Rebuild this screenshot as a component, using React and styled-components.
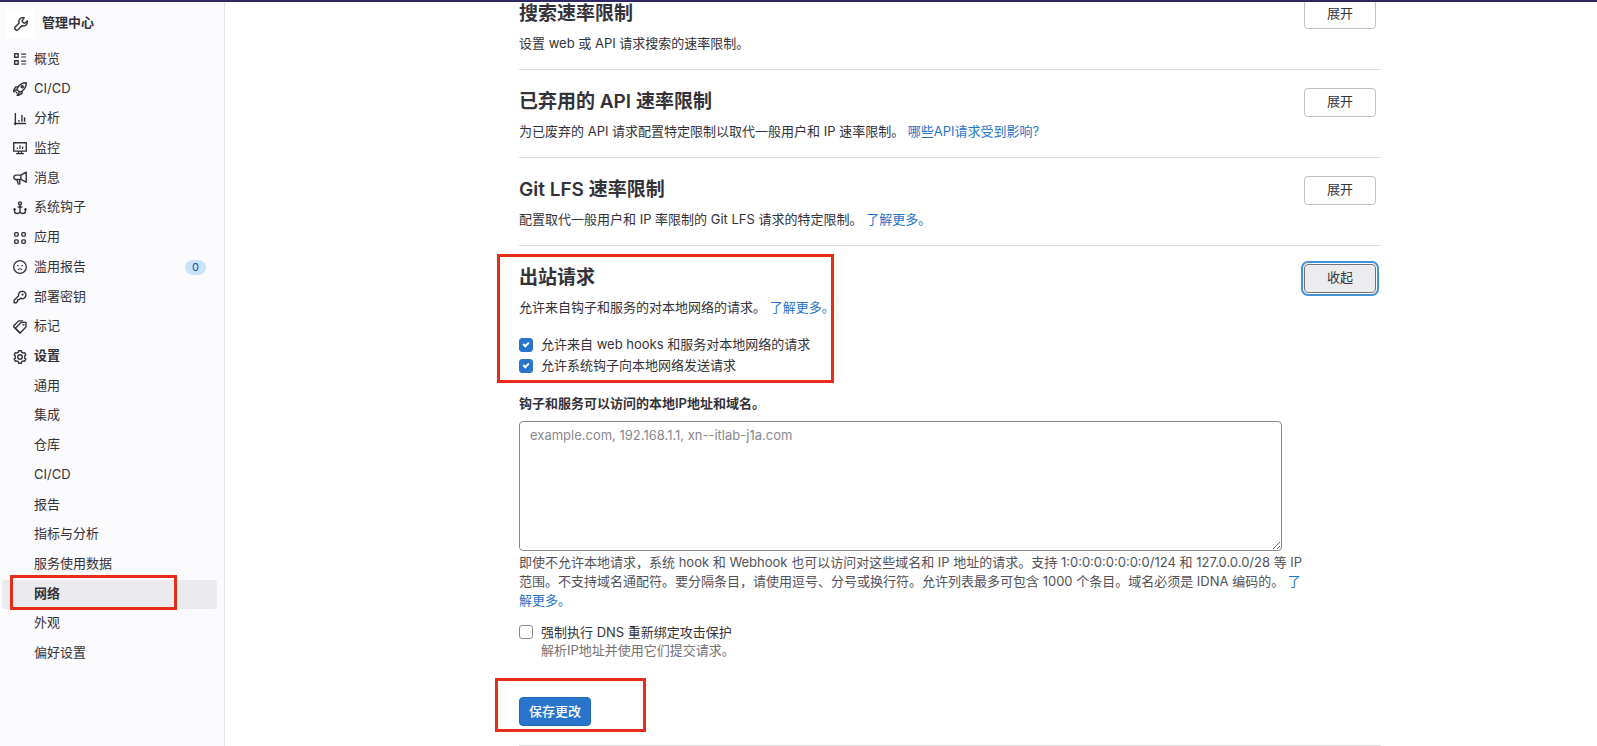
import React from 'react';
import styled, { createGlobalStyle, css } from 'styled-components';

const GlobalStyle = createGlobalStyle`
  *, *::before, *::after { box-sizing: border-box; }
  body {
    margin: 0;
    background: #fff;
    color: #333238;
    font-family: Inter, "Noto Sans CJK SC", sans-serif;
    font-size: 13px;
    line-height: 19px;
  }
  button, input, textarea { font: inherit; color: inherit; }
  h2, p, ul { margin: 0; padding: 0; }
`;

const TopBar = styled.div`
  position: fixed;
  top: 0;
  left: 0;
  right: 0;
  height: 2px;
  background: #2e2860;
  z-index: 2;
`;

const Page = styled.div`
  display: flex;
  min-height: 100vh;
`;

const Sidebar = styled.nav`
  flex: 0 0 225px;
  display: flex;
  flex-direction: column;
  padding: 9px 7px 77px 2px;
  background: #fbfafd;
  border-right: 1px solid #e3e3e6;
`;

const Context = styled.div`
  display: flex;
  align-items: center;
  gap: 7px;
  height: 29px;
  margin: 0 0 7px 4px;
  font-weight: 600;
`;

const ContextIcon = styled.span`
  display: flex;
  align-items: center;
  justify-content: center;
  width: 29px;
  height: 29px;
  border-radius: 4px;
  background: #fff;
`;

const ContextName = styled.span`
  padding-bottom: 2px;
`;

const NavList = styled.ul`
  flex: ${(p) => p.$rows} 1 0;
  display: grid;
  grid-auto-rows: minmax(28px, 1fr);
  list-style: none;
`;

const NavItem = styled.li`
  position: relative;
  display: flex;
  padding-bottom: 1px;
`;

const NavLink = styled.a`
  flex: 1;
  display: flex;
  align-items: center;
  gap: 7px;
  padding: 0 11px;
  border-radius: 4px;
  color: inherit;
  text-decoration: none;
  ${(p) => p.$nested && css`padding-left: 32px;`}
  ${(p) => p.$strong && css`font-weight: 600;`}
  ${(p) => p.$current && css`background: #ebeaee;`}
`;

const NavText = styled.span`
  flex: 1;
  padding-bottom: 2px;
`;

const Badge = styled.span`
  padding: 0 7px;
  border-radius: 8px;
  background: #cbe2f9;
  color: #0b5cad;
  font-size: 11px;
  line-height: 15px;
`;

const Glyph = styled.svg`
  flex: none;
  width: 14px;
  height: 14px;
  fill: none;
  stroke: #333238;
  stroke-width: 1.6;
  stroke-linejoin: round;
`;

const Marker = styled.span`
  position: absolute;
  left: ${(p) => p.$left}px;
  top: ${(p) => p.$top}px;
  width: ${(p) => p.$width}px;
  height: ${(p) => p.$height}px;
  border: 3px solid #e92c1a;
  pointer-events: none;
`;

const Main = styled.main`
  flex: 1;
  min-width: 0;
  margin-top: -18px;
  padding: 0 216px 0 294px;
`;

const Section = styled.section`
  position: relative;
  padding: 18px 0 16px;
  border-bottom: 1px solid #dcdcde;
`;

const SectionHead = styled.header`
  display: flex;
  justify-content: space-between;
  align-items: flex-start;
  height: 53px;
  padding-right: 5px;
`;

const Title = styled.h2`
  margin-bottom: 7px;
  font-size: 19px;
  line-height: 27px;
  font-weight: 600;
`;

const Link = styled.a`
  color: #1f75cb;
  text-decoration: none;
`;

const Button = styled.button`
  flex: none;
  width: 72px;
  height: 29px;
  padding: 0 0 3px;
  border: 1px solid #bfbfc3;
  border-radius: 4px;
  background: #fff;
  ${(p) => p.$open && css`
    border-color: #737278;
    background: #ececef;
    box-shadow: 0 0 0 1px #fff, 0 0 0 3px #428fdc;
    outline: none;
  `}
  ${(p) => p.$primary && css`
    padding-bottom: 1px;
    border-color: #1f69b8;
    background: #2a75cc;
    color: #fff;
    font-weight: 500;
  `}
`;

const Form = styled.form`
  display: flex;
  flex-direction: column;
  align-items: flex-start;
  padding: 17px 0 3px;
`;

const CheckLabel = styled.label`
  display: flex;
  align-items: center;
  gap: 8px;
  line-height: 21px;
`;

const Checkbox = styled.input.attrs({ type: 'checkbox' })`
  appearance: none;
  display: flex;
  justify-content: center;
  flex: none;
  width: 14px;
  height: 14px;
  margin: 0;
  border: 1px solid #89888d;
  border-radius: 3px;
  background: #fff;
  &:checked {
    border-color: #2a75cc;
    background: #2a75cc;
  }
  &:checked::after {
    content: '';
    width: 4px;
    height: 6px;
    margin-top: 2px;
    border: solid #fff;
    border-width: 0 2px 2px 0;
    transform: rotate(45deg);
  }
`;

const FieldLabel = styled.label`
  margin: 18px 0 8px;
  font-weight: 600;
`;

const TextArea = styled.textarea`
  display: block;
  width: calc(100% - 99px);
  height: 130px;
  padding: 4px 10px;
  border: 1px solid #89888d;
  border-radius: 4px;
  background: #fff;
  &::placeholder { color: #89888d; opacity: 1; }
`;

const Help = styled.p`
  margin-top: 2px;
  padding-right: 72px;
  color: #535158;
`;

const CheckGroup = styled.div`
  margin: 13px 0 38px;
  ${CheckLabel} { line-height: 18px; }
`;

const CheckHint = styled.p`
  padding-left: 22px;
  line-height: 18px;
  color: #737278;
`;

const icons = {
  wrench: (
    <path d="M11.600.9a4.600 4.600 0 0 0-5.700 6L1.400 11.400a2.200 2.200 0 0 0 3.100 3.100L9 10a4.600 4.600 0 0 0 6.100-5.500l-2.500 2.300a1 1 0 0 1-1.200.1L9.700 5.600a1 1 0 0 1-.3-1.400zM3.100 12.800v.1" />
  ),
  overview: (
    <>
      <path d="M1.900 2h4v4h-4zM1.900 10h4v4h-4z" />
      <path d="M9.300 2.300h5.700M9.300 5.700h5.700M9.300 10.300h5.700M9.300 13.700h5.700" strokeWidth="1.400" />
    </>
  ),
  rocket: (
    <>
      <path d="M15.200.8c-4.300 0-7.300 1.500-9.800 5.300l-1 2.200 3.300 3.300 2.200-1c3.800-2.500 5.300-5.500 5.300-9.800z" />
      <path d="M5.600 5.600H3.100L.9 9.300v2l3.300-2.800M10.400 10.400v2.500l-3.700 2.200h-2l2.800-3.300M3.200 11.200l1.600 1.600" />
      <circle cx="10.600" cy="5.400" r="1.200" />
    </>
  ),
  chart: (
    <>
      <path d="M2.700 1v14M1 13.200h14" />
      <path d="M6.800 9v2M10.200 3.500V11M13.200 6v5" />
    </>
  ),
  monitor: (
    <>
      <path d="M.8 2h14.400v9.600H.8zM3.500 14.400h9M6.300 11.600v2.600M9.700 11.600v2.600" />
      <path d="M5 7.500V9M8 4.800V9M11 6.300V9" strokeWidth="1.400" />
    </>
  ),
  bullhorn: (
    <path d="M15.100 1.200v11.600L9 9.700H3.200A2.200 2.200 0 0 1 1 7.500v-.6a2.200 2.200 0 0 1 2.200-2.200H9zM9 4.700v5M4.500 9.700l1.300 4.600a1.100 1.100 0 0 0 2.100-.5L7.500 9.700" />
  ),
  anchor: (
    <>
      <circle cx="8" cy="2.700" r="1.700" />
      <path d="M8 4.400V14M5.300 6.800h5.400M1.700 8.500V11c0 2 1.200 3.200 3 3.200 1.500 0 2.800-.7 3.300-2 .5 1.300 1.800 2 3.300 2 1.800 0 3-1.200 3-3.200V8.500M.6 10.200l1.100-1.500 1.400 1.500M12.900 10.200l1.400-1.500 1.100 1.500" />
    </>
  ),
  apps: (
    <>
      <rect x="1.900" y="1.900" width="4" height="4" rx="1.200" />
      <rect x="10.100" y="1.900" width="4" height="4" rx="1.200" />
      <rect x="1.900" y="10.100" width="4" height="4" rx="1.200" />
      <rect x="10.100" y="10.100" width="4" height="4" rx="1.200" />
    </>
  ),
  sad: (
    <>
      <circle cx="8" cy="8" r="7.200" strokeWidth="1.500" />
      <path d="M5.700 11.400c.5-.9 1.400-1.400 2.300-1.400s1.800.5 2.300 1.400M4.700 6l1.700.9M11.300 6l-1.700.9" strokeWidth="1.400" />
    </>
  ),
  key: (
    <>
      <path d="M10.300 1.500a4.200 4.200 0 1 1-1.700 7.900L7 11H5.300v1.800L3.800 14.500H1.300v-2.800l5.100-5a4.200 4.200 0 0 1 3.900-5.200z" />
      <circle cx="10.900" cy="5.200" r=".5" />
    </>
  ),
  labels: (
    <>
      <path d="M9.400 2.700h5.400v5.200L8.200 14.800 2.700 9.300z" />
      <path d="M11.600 1H6.400L1 6.500a1 1 0 0 0 0 1.400l7.200 7.200" />
      <circle cx="12" cy="5.500" r=".4" />
    </>
  ),
  gear: (
    <>
      <path d="M6.500.9h3l.5 1.900c.5.200.9.400 1.300.7l1.900-.5 1.500 2.500-1.400 1.400v2.200l1.400 1.400-1.500 2.500-1.900-.5c-.4.300-.8.500-1.300.7l-.5 1.900h-3L6 13.200c-.5-.2-.9-.4-1.300-.7l-1.900.5-1.500-2.500 1.400-1.400V6.900L1.300 5.500 2.800 3l1.900.5c.4-.3.8-.5 1.300-.7z" />
      <circle cx="8" cy="8" r="2.600" />
    </>
  ),
};

const Icon = ({ name }) => (
  <Glyph viewBox="0 0 16 16" aria-hidden="true">{icons[name]}</Glyph>
);

const primaryNav = [
  { icon: 'overview', text: '概览' },
  { icon: 'rocket', text: 'CI/CD' },
  { icon: 'chart', text: '分析' },
  { icon: 'monitor', text: '监控' },
  { icon: 'bullhorn', text: '消息' },
  { icon: 'anchor', text: '系统钩子' },
  { icon: 'apps', text: '应用' },
  { icon: 'sad', text: '滥用报告', count: '0' },
  { icon: 'key', text: '部署密钥' },
  { icon: 'labels', text: '标记' },
  { icon: 'gear', text: '设置', strong: true },
];

const settingsNav = ['通用', '集成', '仓库', 'CI/CD', '报告', '指标与分析', '服务使用数据', '网络', '外观', '偏好设置'];

const limitSections = [
  { title: '搜索速率限制', text: '设置 web 或 API 请求搜索的速率限制。' },
  {
    title: '已弃用的 API 速率限制',
    text: '为已废弃的 API 请求配置特定限制以取代一般用户和 IP 速率限制。',
    link: '哪些API请求受到影响?',
  },
  {
    title: 'Git LFS 速率限制',
    text: '配置取代一般用户和 IP 率限制的 Git LFS 请求的特定限制。',
    link: '了解更多。',
  },
];

const SectionHeader = ({ title, text, link, open }) => (
  <SectionHead>
    <div>
      <Title>{title}</Title>
      <p>
        {text} {link && <Link href="#">{link}</Link>}
      </p>
    </div>
    <Button type="button" $open={open} aria-expanded={Boolean(open)}>
      {open ? '收起' : '展开'}
    </Button>
  </SectionHead>
);

export default function App() {
  return (
    <>
      <GlobalStyle />
      <TopBar />
      <Page>
        <Sidebar>
          <Context>
            <ContextIcon><Icon name="wrench" /></ContextIcon>
            <ContextName>管理中心</ContextName>
          </Context>
          <NavList $rows={primaryNav.length}>
            {primaryNav.map((item) => (
              <NavItem key={item.text}>
                <NavLink href="#" $strong={item.strong}>
                  <Icon name={item.icon} />
                  <NavText>{item.text}</NavText>
                  {item.count && <Badge>{item.count}</Badge>}
                </NavLink>
              </NavItem>
            ))}
          </NavList>
          <NavList $rows={settingsNav.length}>
            {settingsNav.map((text) => {
              const current = text === '网络';
              return (
                <NavItem key={text}>
                  <NavLink href="#" $nested $strong={current} $current={current}>
                    <NavText>{text}</NavText>
                  </NavLink>
                  {current && <Marker $left={8} $top={-5} $width={167} $height={35} />}
                </NavItem>
              );
            })}
          </NavList>
        </Sidebar>

        <Main>
          {limitSections.map((section) => (
            <Section key={section.title}>
              <SectionHeader {...section} />
            </Section>
          ))}
          <Section>
            <SectionHeader
              open
              title="出站请求"
              text="允许来自钩子和服务的对本地网络的请求。"
              link="了解更多。"
            />
            <Form>
              <CheckLabel>
                <Checkbox defaultChecked />
                允许来自 web hooks 和服务对本地网络的请求
              </CheckLabel>
              <CheckLabel>
                <Checkbox defaultChecked />
                允许系统钩子向本地网络发送请求
              </CheckLabel>
              <FieldLabel htmlFor="allowlist">钩子和服务可以访问的本地IP地址和域名。</FieldLabel>
              <TextArea id="allowlist" placeholder="example.com, 192.168.1.1, xn--itlab-j1a.com" />
              <Help>
                即使不允许本地请求，系统 hook 和 Webhook 也可以访问对这些域名和 IP 地址的请求。支持
                1:0:0:0:0:0:0:0/124 和 127.0.0.0/28 等 IP
                范围。不支持域名通配符。要分隔条目，请使用逗号、分号或换行符。允许列表最多可包含 1000
                个条目。域名必须是 IDNA 编码的。 <Link href="#">了解更多。</Link>
              </Help>
              <CheckGroup>
                <CheckLabel>
                  <Checkbox />
                  强制执行 DNS 重新绑定攻击保护
                </CheckLabel>
                <CheckHint>解析IP地址并使用它们提交请求。</CheckHint>
              </CheckGroup>
              <Button type="button" $primary>保存更改</Button>
            </Form>
            <Marker $left={-22} $top={8} $width={337} $height={129} />
            <Marker $left={-24} $top={432} $width={151} $height={54} />
          </Section>
        </Main>
      </Page>
    </>
  );
}
